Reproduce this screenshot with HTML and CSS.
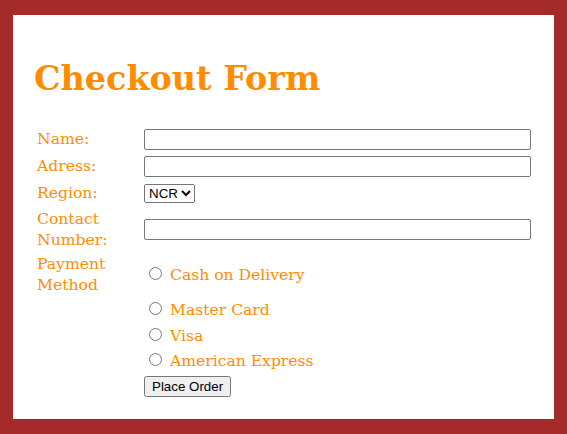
FILE: index.html
```html
<!DOCTYPE html>
<html lang="en">
<head>
<meta charset="utf-8">
<title>Checkout Form</title>
<link rel="stylesheet" href="styles.css">
</head>
<body>
<div class="card">
  <h1 class="title">Checkout Form</h1>
  <form class="checkout">
    <table class="form-table">
      <tr>
        <td class="label">Name:</td>
        <td><input class="field" type="text"></td>
      </tr>
      <tr>
        <td class="label">Adress:</td>
        <td><input class="field" type="text"></td>
      </tr>
      <tr>
        <td class="label">Region:</td>
        <td><select class="picker"><option>NCR</option></select></td>
      </tr>
      <tr>
        <td class="label">Contact Number:</td>
        <td><input class="field" type="text"></td>
      </tr>
      <tr>
        <td class="label">Payment Method</td>
        <td><input class="radio" type="radio" name="pay"> Cash on Delivery</td>
      </tr>
      <tr>
        <td></td>
        <td><input class="radio" type="radio" name="pay"> Master Card</td>
      </tr>
      <tr>
        <td></td>
        <td><input class="radio" type="radio" name="pay"> Visa</td>
      </tr>
      <tr>
        <td></td>
        <td><input class="radio" type="radio" name="pay"> American Express</td>
      </tr>
      <tr>
        <td></td>
        <td><button class="submit" type="button">Place Order</button></td>
      </tr>
    </table>
  </form>
</div>
</body>
</html>
```

FILE: styles.css
```css
html, body {
  margin: 0;
  background: #a52a2a;
}
body {
  padding: 15px 13px 14px 13px;
}
.card {
  background: #ffffff;
  padding: 41px 20px 19px 21px;
  font-family: "DejaVu Serif", "Liberation Serif", serif;
  color: #ff8c00;
}
.title {
  margin: 0 0 23px 0;
  font-size: 33.4px;
  line-height: 46px;
  font-weight: bold;
  color: #ff8c00;
}
.checkout {
  margin: 0;
}
.form-table {
  width: 100%;
  border-spacing: 2px;
  font-size: 15.6px;
  line-height: 20.5px;
  color: #ff8c00;
}
.form-table td {
  padding: 1px;
}
.form-table td.label {
  width: 103px;
}
.field {
  box-sizing: border-box;
  width: 100%;
  height: 21px;
  margin: 1px 0;
  vertical-align: middle;
  font: 13.33px "Liberation Sans", Arial, sans-serif;
  border: 1px solid #767676;
  border-radius: 2px;
}
.picker {
  font: 13.33px "Liberation Sans", Arial, sans-serif;
  height: 19px;
  margin: 2px 0;
  vertical-align: middle;
  color: #000;
}
.radio {
  margin: 3px 3px 0 5px;
}
.submit {
  font: 13.33px "Liberation Sans", Arial, sans-serif;
  margin: 0;
  color: #000;
}
```
